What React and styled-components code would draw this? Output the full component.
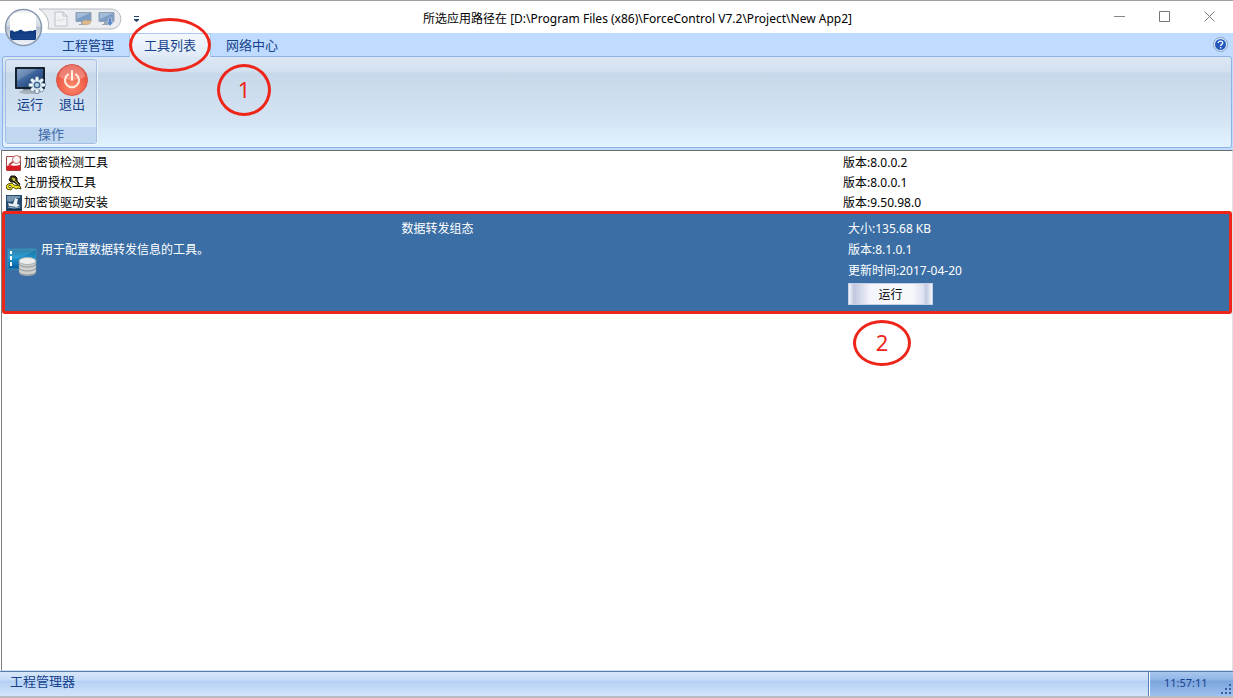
import { useState } from "react";
import styled, { createGlobalStyle } from "styled-components";

const GlobalStyle = createGlobalStyle`
  * {
    box-sizing: border-box;
  }

  body {
    margin: 0;
    font-family: "Noto Sans", "Noto Sans CJK SC", sans-serif;
    font-size: 12px;
    color: #000;
  }

  button {
    font: inherit;
    color: inherit;
    padding: 0;
    border: 0;
    background: none;
  }
`;

const Window = styled.div`
  display: flex;
  flex-direction: column;
  min-height: 100vh;
  border-top: 1px solid #a0a0a0;
  border-bottom: 2px solid #b9bdc2;
  background: #fff;
`;

const TitleBar = styled.header`
  position: relative;
  display: flex;
  height: 32px;
  padding-right: 1px;
`;

const QuickBar = styled.div`
  position: relative;
  display: flex;
  align-items: center;
  gap: 6px;
  width: 178px;
  height: 36px;
  padding-left: 53px;
`;

const QuickShape = styled.svg`
  position: absolute;
  left: 38px;
  top: 7px;
`;

const QuickButton = styled.button`
  position: relative;
  display: flex;
  opacity: ${(props) => (props.$faded ? 0.6 : 1)};
`;

const MoreButton = styled.button`
  display: flex;
  margin-left: 12px;
`;

const AppButton = styled.button`
  position: absolute;
  z-index: 2;
  left: 4px;
  top: 7px;
  display: flex;
`;

const Title = styled.h1`
  flex: 1;
  margin: 0;
  font-size: 12px;
  font-weight: 400;
  line-height: 36px;
  text-align: center;
  white-space: nowrap;
`;

const WindowButton = styled.button`
  display: flex;
  align-items: center;
  justify-content: center;
  width: 45px;
  height: 30px;
`;

const TabRow = styled.nav`
  display: flex;
  align-items: flex-start;
  height: 23px;
  padding: 0 5px 0 47px;
  background: #bfdbff;
`;

const Tab = styled.button`
  position: relative;
  width: 82px;
  height: 24px;
  padding-bottom: 2px;
  font-size: 13px;
  line-height: 20px;
  color: #15428b;
  border: 1px solid ${(props) => (props.$active ? "#a9c8ee" : "transparent")};
  border-bottom: 0;
  border-radius: 3px 3px 0 0;
  background: ${(props) =>
    props.$active ? "linear-gradient(#f4f8fe, #dfe9f6)" : "transparent"};
`;

const HelpButton = styled.button`
  display: flex;
  margin: 4px 0 0 auto;
`;

const Mark = styled.span`
  position: absolute;
  z-index: 3;
  display: flex;
  align-items: center;
  justify-content: center;
  width: ${(props) => props.$width}px;
  height: ${(props) => props.$height}px;
  left: ${(props) => props.$left}px;
  top: ${(props) => props.$top}px;
  padding-bottom: 2px;
  border: 3px solid #ee2519;
  border-radius: 50%;
  font-size: 22px;
  color: #ee2519;
  pointer-events: none;
`;

const RibbonArea = styled.div`
  padding: 0 1px 2px 2px;
  background: #bfdbff;
`;

const Ribbon = styled.section`
  display: flex;
  height: 92px;
  padding: 2px 2px 3px;
  border: 1px solid #8db2e3;
  border-radius: 3px;
  background: linear-gradient(
    #dce7f4 0,
    #d3e0ef 14px,
    #c7d8ea 17px,
    #d4e3f3 60px,
    #e3f3ff 92px
  );
`;

const Group = styled.div`
  display: flex;
  flex-direction: column;
  width: 92px;
  border: 1px solid #a3c0e2;
  border-radius: 3px;
  box-shadow: 1px 1px 0 #eef5fd;
`;

const GroupTools = styled.div`
  flex: 1;
  display: flex;
  justify-content: center;
  padding-top: 4px;
`;

const GroupLabel = styled.div`
  height: 16px;
  font-size: 13px;
  line-height: 15px;
  text-align: center;
  color: #3e6aaa;
  background: #c1d8f0;
`;

const ToolButton = styled.button`
  display: flex;
  flex-direction: column;
  align-items: center;
  width: 42px;
  font-size: 13px;
  line-height: 17px;
  color: #15428b;
`;

const ToolList = styled.main`
  flex: 1;
  margin-left: 1px;
  padding-top: 2px;
  border-top: 1px solid #6b6b6b;
  border-left: 1px solid #7d7d7d;
  border-right: 1px solid #dfe3e8;
  border-bottom: 1px solid #d5dfec;
`;

const Row = styled.div`
  display: grid;
  grid-template-columns: 841fr 389fr;
  align-items: center;
  height: 20px;
  line-height: 20px;
`;

const RowName = styled.div`
  display: flex;
  align-items: center;
  gap: 2px;
  padding-left: 4px;
`;

const SelectedRow = styled.section`
  position: relative;
  display: grid;
  grid-template-columns: 843fr 381fr;
  min-height: 103px;
  margin-top: -2px;
  border: 3px solid #ee2519;
  border-radius: 3px;
  line-height: 21px;
  color: #fff;
  background: #3a6ea5;
`;

const Summary = styled.div`
  display: grid;
  grid-template-columns: 31px 1fr;
  grid-template-rows: 21px 1fr;
  column-gap: 3px;
  padding: 4px 14px 0 2px;
`;

const SummaryIcon = styled.div`
  grid-row: 1 / 3;
  padding-top: 28px;
`;

const SummaryTitle = styled.h2`
  margin: 0;
  font-size: 12px;
  font-weight: 400;
  text-align: center;
`;

const Description = styled.p`
  margin: 0;
`;

const Details = styled.div`
  position: relative;
  padding-top: 4px;
`;

const RunButton = styled.button`
  display: block;
  width: 85px;
  height: 22px;
  margin-top: 2px;
  line-height: 22px;
  color: #000;
  border: 1px solid #c5cfe6;
  background: linear-gradient(
    90deg,
    #f4f6fb 0%,
    #bfc6de 6%,
    #d5daea 14%,
    #f4f5fb 26%,
    #f8f9fd 50%,
    #f7f8fc 76%,
    #dfe2f0 89%,
    #c3c9e0 93%,
    #f4f6fb 100%
  );
`;

const StatusBar = styled.footer`
  display: flex;
  height: 25px;
  border-top: 1px solid #567db1;
  color: #15428b;
  background: linear-gradient(#d7e6f9 0, #c7dcf8 8px, #b3d0f5 9px, #d3e5fa 24px);
`;

const StatusText = styled.div`
  flex: 1;
  padding-left: 10px;
  font-size: 13px;
  line-height: 18px;
`;

const Clock = styled.div`
  display: flex;
  align-items: flex-end;
  justify-content: space-between;
  width: 85px;
  padding: 0 1px 1px 15px;
  border-left: 1px solid #567db1;
  box-shadow: inset 1px 0 0 #fff;
  font-size: 11px;
  line-height: 24px;
  background: linear-gradient(#a9c7ee 0, #8fb4e6 8px, #7ba4dc 9px, #9dc1ef 24px);
`;

const tabs = ["工程管理", "工具列表", "网络中心"];

const tools = [
  { name: "加密锁检测工具", version: "8.0.0.2", icon: <InspectIcon /> },
  { name: "注册授权工具", version: "8.0.0.1", icon: <KeysIcon /> },
  { name: "加密锁驱动安装", version: "9.50.98.0", icon: <DriverIcon /> },
];

function OrbIcon() {
  return (
    <svg width="39" height="39" viewBox="0 0 39 39">
      <defs>
        <linearGradient id="orb" x1="0" y1="0" x2="0" y2="1">
          <stop offset="0" stopColor="#f5f7fa" />
          <stop offset="0.45" stopColor="#d5dbe3" />
          <stop offset="0.5" stopColor="#b3c0d0" />
          <stop offset="1" stopColor="#f4f8fc" />
        </linearGradient>
        <clipPath id="orbClip">
          <circle cx="19.5" cy="19.5" r="17" />
        </clipPath>
      </defs>
      <circle cx="19.5" cy="19.5" r="18" fill="url(#orb)" stroke="#8898ad" strokeWidth="1.5" />
      <g clipPath="url(#orbClip)">
        <path d="M6 5h26v21H6z" fill="#fff" />
        <path d="M6 23l2-1c2 3 4 1 6 1 2-2 4-1 5 0 2 1 4 0 6 0 2-1 4 1 5-1h2v10H6z" fill="#123c82" />
        <path d="M8 27h22M7 30h24" stroke="#1e4d9a" />
      </g>
    </svg>
  );
}

function PageIcon() {
  return (
    <svg width="16" height="16" viewBox="0 0 16 16">
      <path d="M2 1h8l4 4v10H2z" fill="#f4f6f8" stroke="#9da8b5" />
      <path d="M10 1v4h4" fill="none" stroke="#9da8b5" />
      <path d="M4 10c2-3 3 1 5-1s2 0 3-1" fill="none" stroke="#bcc5ce" />
    </svg>
  );
}

function ScreenIcon({ down }) {
  return (
    <svg width="17" height="16" viewBox="0 0 17 16">
      <path d="M1 1.500h15v9H1z" fill="#7e9dc4" stroke="#93a1b4" />
      <path d="M2 2h13L2 8z" fill="#a3bcd9" />
      <path d="M6 11h5v2H6zM4 13h8v1H4z" fill="#9ba6b4" />
      {down ? (
        <path d="M10.500 7h3v4h2l-3.500 4-3.500-4h2z" fill="#5784c4" stroke="#d6e2f1" strokeWidth="0.5" />
      ) : (
        <path d="M8 10l3-1 2 1 3-1-1 4-6 1-2-2z" fill="#dfb98b" stroke="#c4a078" strokeWidth="0.5" />
      )}
    </svg>
  );
}

function RunIcon() {
  const teeth = [0, 45, 90, 135, 180, 225, 270, 315];
  return (
    <svg width="34" height="32" viewBox="0 0 34 32">
      <defs>
        <linearGradient id="screen" x1="0" y1="0" x2="1" y2="1">
          <stop offset="0" stopColor="#7192bd" />
          <stop offset="0.5" stopColor="#385f97" />
          <stop offset="1" stopColor="#173868" />
        </linearGradient>
      </defs>
      <path d="M11 24h10l2 4h-14z" fill="#7c8794" />
      <ellipse cx="17" cy="28" rx="11" ry="2" fill="#a9b3be" />
      <rect x="2" y="3" width="30" height="22" rx="1" fill="#16212f" />
      <path d="M4 5h26v18H4z" fill="url(#screen)" />
      <path d="M4 5h20L4 17z" fill="#fff" opacity="0.15" />
      <g transform="translate(24 21)">
        {teeth.map((angle) => (
          <path
            key={angle}
            d="M-1.500-8.500h3l.7 4h-4.400z"
            transform={`rotate(${angle})`}
            fill="#eaf4fc"
            stroke="#33506f"
            strokeWidth="0.5"
          />
        ))}
        <circle r="5" fill="#e9f3fb" />
        <circle r="3.500" fill="#42698f" />
        <circle r="2" fill="#b9d4e9" />
      </g>
    </svg>
  );
}

function ExitIcon() {
  return (
    <svg width="34" height="32" viewBox="0 0 34 32">
      <defs>
        <radialGradient id="exit" cx="0.5" cy="0.7" r="0.7">
          <stop offset="0" stopColor="#ff8a6c" />
          <stop offset="0.6" stopColor="#f0604c" />
          <stop offset="1" stopColor="#dc4035" />
        </radialGradient>
      </defs>
      <circle cx="17" cy="16" r="15.500" fill="url(#exit)" stroke="#d65a50" />
      <path d="M4 13a13 12 0 0 1 26 0q-13 6-26 0z" fill="#fff" opacity="0.25" />
      <path d="M13 10.500a7 7 0 1 0 8 0M17 7v9" fill="none" stroke="#fff0e4" strokeWidth="2" strokeLinecap="round" />
    </svg>
  );
}

function InspectIcon() {
  return (
    <svg width="16" height="16" viewBox="0 0 16 16">
      <path d="M.5 1.500h14v14H.5z" fill="#fff" stroke="#a3423f" />
      <path d="M1 11c3-2 6 1 13-1v5H1z" fill="#d91923" />
      <path d="M3 10l5-4" stroke="#b84442" strokeWidth="2" />
      <circle cx="10.500" cy="4.500" r="4" fill="#fdf3f2" stroke="#bd6863" />
    </svg>
  );
}

function KeysIcon() {
  return (
    <svg width="16" height="16" viewBox="0 0 16 16">
      <path d="M5 1h4l2 2v3l3 3-1 2-5-4H5L3 5z" fill="#363611" stroke="#111" />
      <path d="M6 3l3 1-1 2zM9 6l4 4" fill="#fff" stroke="#bcb52b" />
      <path d="M2 9l4-1 2 2 6 1 1 3-3-1-2 1-3-2-2 3-4-1-1-3z" fill="#f1e621" stroke="#555000" />
      <circle cx="4" cy="11.500" r="1.300" fill="#fff" stroke="#555000" />
    </svg>
  );
}

function DriverIcon() {
  return (
    <svg width="16" height="16" viewBox="0 0 16 16">
      <path d="M0 0h16v16H0z" fill="#254c70" />
      <path d="M1 1h13v2H9L7 6 4 7 1 6z" fill="#7896ae" />
      <path d="M2 8l5 1 2-6 3 1-1 5 3 1-3 2-8-1z" fill="#e9f0f4" />
      <path d="M2 12l6 1 6-1" fill="none" stroke="#9db5c8" />
      <path d="M1 14.500h14" stroke="#102d48" />
    </svg>
  );
}

function ForwardIcon() {
  return (
    <svg width="31" height="32" viewBox="0 0 31 32">
      <defs>
        <linearGradient id="forward" x1="0" y1="0" x2="0" y2="1">
          <stop offset="0" stopColor="#1d6c98" />
          <stop offset="0.45" stopColor="#1a93cf" />
          <stop offset="1" stopColor="#075a99" />
        </linearGradient>
      </defs>
      <path d="M1 3h28v20H1z" fill="url(#forward)" stroke="#378db6" />
      <path d="M1 13Q15 13 29 4V3H1z" fill="#7fd6ee" opacity="0.2" />
      <path d="M3 5h2v3H3zM3 10h2v4H3zM3 16h2v4H3z" fill="#fff" />
      <path d="M12 15v11c0 5 17 5 17 0V15z" fill="#cdd0cf" stroke="#858c91" strokeWidth="0.5" />
      <path d="M12 18c2 4 15 4 17 0M12 22c2 4 15 4 17 0M12 26c2 4 15 4 17 0" fill="none" stroke="#8e9495" />
      <ellipse cx="20.500" cy="15" rx="8.500" ry="3.500" fill="#eceeec" stroke="#a8afb1" />
    </svg>
  );
}

function HelpIcon() {
  return (
    <svg width="15" height="15" viewBox="0 0 15 15">
      <circle cx="7.500" cy="7.500" r="7" fill="#e4f1fc" stroke="#6081ad" strokeWidth="0.700" />
      <circle cx="7.500" cy="7.500" r="5.500" fill="#2458bd" />
      <path d="M5.300 6c0-2.600 4.400-2.600 4.400 0 0 1.400-2.100 1.400-2.100 3M7.600 10v1.500" fill="none" stroke="#fff" strokeWidth="1.300" />
    </svg>
  );
}

export default function App() {
  const [activeTab, setActiveTab] = useState("工具列表");

  return (
    <>
      <GlobalStyle />
      <Window>
        <TitleBar>
          <AppButton aria-label="应用菜单">
            <OrbIcon />
          </AppButton>
          <QuickBar>
            <QuickShape width="84" height="22" viewBox="0 0 84 22">
              <path d="M1 1h72c13 0 13 20 0 20H10C12 13 8 5 1 1z" fill="#ebedf0" stroke="#b3b9c0" />
            </QuickShape>
            <QuickButton aria-label="新建" $faded>
              <PageIcon />
            </QuickButton>
            <QuickButton aria-label="打开">
              <ScreenIcon />
            </QuickButton>
            <QuickButton aria-label="下载">
              <ScreenIcon down />
            </QuickButton>
            <MoreButton aria-label="自定义">
              <svg width="7" height="7" viewBox="0 0 7 7">
                <path d="M1 0h5v1H1zM1 3h5v1L3.500 6 1 4z" fill="#23426f" />
              </svg>
            </MoreButton>
          </QuickBar>
          <Title>{"所选应用路径在 [D:\\Program Files (x86)\\ForceControl V7.2\\Project\\New App2]"}</Title>
          <WindowButton aria-label="最小化">
            <svg width="11" height="11" viewBox="0 0 11 11">
              <path d="M0 5.500h11" stroke="#888" />
            </svg>
          </WindowButton>
          <WindowButton aria-label="最大化">
            <svg width="11" height="11" viewBox="0 0 11 11">
              <path d="M.5.5h10v10H.5z" fill="none" stroke="#777" />
            </svg>
          </WindowButton>
          <WindowButton aria-label="关闭">
            <svg width="11" height="11" viewBox="0 0 11 11">
              <path d="M.5.5l10 10M10.500.5l-10 10" stroke="#777" />
            </svg>
          </WindowButton>
        </TitleBar>

        <TabRow>
          {tabs.map((tab) => (
            <Tab key={tab} $active={tab === activeTab} onClick={() => setActiveTab(tab)}>
              {tab}
              {tab === "工具列表" && <Mark $width={82} $height={54} $left={-1} $top={-16} />}
              {tab === "网络中心" && (
                <Mark $width={54} $height={52} $left={5} $top={30}>
                  1
                </Mark>
              )}
            </Tab>
          ))}
          <HelpButton aria-label="帮助">
            <HelpIcon />
          </HelpButton>
        </TabRow>

        <RibbonArea>
          <Ribbon>
            <Group>
              <GroupTools>
                <ToolButton>
                  <RunIcon />
                  运行
                </ToolButton>
                <ToolButton>
                  <ExitIcon />
                  退出
                </ToolButton>
              </GroupTools>
              <GroupLabel>操作</GroupLabel>
            </Group>
          </Ribbon>
        </RibbonArea>

        <ToolList>
          {tools.map((tool) => (
            <Row key={tool.name}>
              <RowName>
                {tool.icon}
                {tool.name}
              </RowName>
              <div>版本:{tool.version}</div>
            </Row>
          ))}
          <SelectedRow>
            <Summary>
              <SummaryIcon>
                <ForwardIcon />
              </SummaryIcon>
              <SummaryTitle>数据转发组态</SummaryTitle>
              <Description>用于配置数据转发信息的工具。</Description>
            </Summary>
            <Details>
              <div>大小:135.68 KB</div>
              <div>版本:8.1.0.1</div>
              <div>更新时间:2017-04-20</div>
              <RunButton>运行</RunButton>
              <Mark $width={58} $height={46} $left={5} $top={106}>
                2
              </Mark>
            </Details>
          </SelectedRow>
        </ToolList>

        <StatusBar>
          <StatusText>工程管理器</StatusText>
          <Clock>
            11:57:11
            <svg width="11" height="11" viewBox="0 0 11 11">
              <path d="M8 0h2v2H8zM4 4h2v2H4zM8 4h2v2H8zM0 8h2v2H0zM4 8h2v2H4zM8 8h2v2H8z" fill="#365f9e" />
            </svg>
          </Clock>
        </StatusBar>
      </Window>
    </>
  );
}
